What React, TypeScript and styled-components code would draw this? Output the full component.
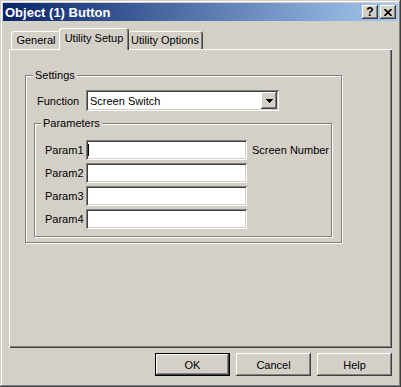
import { Fragment } from "react";
import { createGlobalStyle, styled, css } from "styled-components";

const face = "#d4d0c8";

const GlobalStyle = createGlobalStyle`
  body {
    margin: 0;
    background: ${face};
    font-family: "Liberation Sans", Arial, sans-serif;
    font-size: 11px;
    color: #000;
  }
`;

const raised = css`
  box-shadow: inset -1px -1px #404040, inset 1px 1px #fff, inset -2px -2px #808080,
    inset 2px 2px ${face};
`;

const sunken = css`
  box-shadow: inset 1px 1px #808080, inset -1px -1px #fff, inset 2px 2px #404040,
    inset -2px -2px ${face};
`;

const Window = styled.div`
  box-sizing: border-box;
  width: 401px;
  height: 387px;
  padding: 3px;
  background: ${face};
  display: flex;
  flex-direction: column;
  box-shadow: inset -1px -1px #404040, inset 1px 1px ${face}, inset -2px -2px #808080,
    inset 2px 2px #fff;
`;

const TitleBar = styled.div`
  height: 18px;
  display: flex;
  align-items: center;
  justify-content: space-between;
  padding: 0 2px;
  background: linear-gradient(to right, #0a246a, #a6caf0);
`;

const Title = styled.span`
  color: #fff;
  font-weight: bold;
  font-size: 13px;
`;

const TitleButtons = styled.div`
  display: flex;
  gap: 2px;
`;

const CaptionButton = styled.div`
  width: 16px;
  height: 14px;
  background: ${face};
  display: flex;
  align-items: center;
  justify-content: center;
  font-weight: bold;
  font-size: 12px;
  line-height: 1;
  ${raised}
`;

const Body = styled.div`
  flex: 1;
  display: flex;
  flex-direction: column;
  padding: 7px 6px 0 6px;
`;

const TabStrip = styled.div`
  height: 21px;
  display: flex;
  align-items: flex-end;
  padding-left: 2px;
`;

const Tab = styled.div<{ $active?: boolean; $w: number }>`
  box-sizing: border-box;
  width: ${(p) => p.$w}px;
  height: ${(p) => (p.$active ? 22 : 18)}px;
  margin: ${(p) => (p.$active ? "0 -2px -1px" : "0")};
  padding-bottom: ${(p) => (p.$active ? 3 : 0)}px;
  position: relative;
  z-index: ${(p) => (p.$active ? 1 : 0)};
  display: flex;
  align-items: center;
  justify-content: center;
  background: ${face};
  border-radius: 3px 3px 0 0;
  box-shadow: inset 1px 1px #fff, inset -1px 0 #404040, inset -2px 0 #808080;
`;

const TabPane = styled.div`
  box-sizing: border-box;
  height: 299px;
  padding: 26px 0 0 16px;
  box-shadow: inset 1px 1px #fff, inset -1px -1px #404040, inset -2px -2px #808080;
`;

const Group = styled.div`
  box-sizing: border-box;
  position: relative;
  border: 1px solid #808080;
  box-shadow: inset 1px 1px #fff, 1px 1px #fff;
`;

const SettingsGroup = styled(Group)`
  width: 317px;
  height: 168px;
  padding: 14px 0 0 8px;
`;

const ParamsGroup = styled(Group)`
  width: 298px;
  height: 114px;
  margin-top: 12px;
  padding: 16px 0 0 10px;
`;

const Caption = styled.span<{ $left: number }>`
  position: absolute;
  top: -7px;
  left: ${(p) => p.$left}px;
  padding: 0 2px;
  line-height: 13px;
  background: ${face};
`;

const FieldRow = styled.div`
  display: flex;
  align-items: center;
  padding-left: 3px;
`;

const FieldLabel = styled.span`
  width: 49px;
`;

const Combo = styled.div`
  box-sizing: border-box;
  width: 193px;
  height: 21px;
  padding: 2px;
  display: flex;
  align-items: center;
  background: #fff;
  ${sunken}
`;

const ComboText = styled.span`
  flex: 1;
  padding-left: 2px;
`;

const DropButton = styled.div`
  width: 16px;
  height: 17px;
  display: flex;
  align-items: center;
  justify-content: center;
  background: ${face};
  ${raised}
`;

const ParamGrid = styled.div`
  display: grid;
  grid-template-columns: 41px 161px auto;
  grid-auto-rows: 20px;
  row-gap: 3px;
  align-items: center;
`;

const Field = styled.div`
  box-sizing: border-box;
  height: 20px;
  padding: 4px 2px;
  display: flex;
  align-items: stretch;
  background: #fff;
  ${sunken}
`;

const Caret = styled.span`
  width: 1px;
  background: #000;
`;

const Hint = styled.span`
  padding-left: 5px;
`;

const ButtonRow = styled.div`
  display: flex;
  justify-content: flex-end;
  gap: 6px;
  margin-top: 5px;
`;

const Button = styled.div<{ $default?: boolean }>`
  box-sizing: border-box;
  width: 75px;
  height: 23px;
  display: flex;
  align-items: center;
  justify-content: center;
  background: ${face};
  ${(p) =>
    p.$default
      ? css`
          box-shadow: inset 0 0 0 1px #000, inset -2px -2px #404040, inset 2px 2px #fff,
            inset -3px -3px #808080;
        `
      : raised}
`;

const params = ["Param1", "Param2", "Param3", "Param4"];

export default function App() {
  return (
    <>
      <GlobalStyle />
      <Window>
        <TitleBar>
          <Title>Object (1) Button</Title>
          <TitleButtons>
            <CaptionButton>?</CaptionButton>
            <CaptionButton>
              <svg width="8" height="7" viewBox="0 0 8 7">
                <path d="M0.5 0 L7.5 7 M7.5 0 L0.5 7" stroke="#000" strokeWidth="1.6" />
              </svg>
            </CaptionButton>
          </TitleButtons>
        </TitleBar>
        <Body>
          <TabStrip>
            <Tab $w={50}>General</Tab>
            <Tab $w={70} $active>
              Utility Setup
            </Tab>
            <Tab $w={76}>Utility Options</Tab>
          </TabStrip>
          <TabPane>
            <SettingsGroup>
              <Caption $left={7}>Settings</Caption>
              <FieldRow>
                <FieldLabel>Function</FieldLabel>
                <Combo>
                  <ComboText>Screen Switch</ComboText>
                  <DropButton>
                    <svg width="7" height="4" viewBox="0 0 7 4" shapeRendering="crispEdges">
                      <path d="M0 0h7v1h-1v1h-1v1h-1v1h-1v-1h-1v-1h-1v-1h-1z" fill="#000" />
                    </svg>
                  </DropButton>
                </Combo>
              </FieldRow>
              <ParamsGroup>
                <Caption $left={6}>Parameters</Caption>
                <ParamGrid>
                  {params.map((name, i) => (
                    <Fragment key={name}>
                      <span>{name}</span>
                      <Field>{i === 0 && <Caret />}</Field>
                      {i === 0 ? <Hint>Screen Number</Hint> : <span />}
                    </Fragment>
                  ))}
                </ParamGrid>
              </ParamsGroup>
            </SettingsGroup>
          </TabPane>
          <ButtonRow>
            <Button $default>OK</Button>
            <Button>Cancel</Button>
            <Button>Help</Button>
          </ButtonRow>
        </Body>
      </Window>
    </>
  );
}
